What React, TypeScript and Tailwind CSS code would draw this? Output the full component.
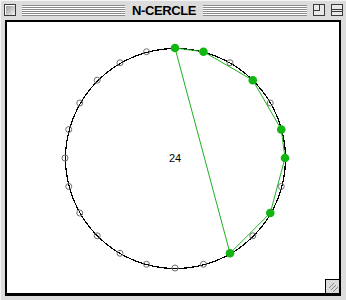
import React from 'react';

const CX = 168; // centre in content coords (page x 174 - 6)
const CY = 136; // page y 157 - 21
const R = 110;
const N = 24;
const picked = [0, 1, 3, 5, 6, 8, 10];

function pt(i: number) {
  const a = (i / N) * Math.PI * 2 - Math.PI / 2;
  return { x: CX + R * Math.cos(a), y: CY + R * Math.sin(a) };
}

function TitleStripes({ className }: { className: string }) {
  return (
    <div
      className={`h-[11px] bg-[repeating-linear-gradient(to_bottom,#8a8a8a_0px,#8a8a8a_1px,#ffffff_1px,#ffffff_2px)] ${className}`}
    />
  );
}

export default function App() {
  const poly = picked.map((i) => pt(i)).map((p) => `${p.x},${p.y}`).join(' ');

  return (
    <div className="w-[346px] h-[300px] bg-[#dcdcdc] border-l border-t border-[#f4f4f4] flex flex-col overflow-hidden">
      {/* title bar */}
      <div className="h-[18px] flex items-center px-[3px] gap-[6px]">
        <div className="w-[12px] h-[12px] border border-[#3a3a3a] bg-[linear-gradient(135deg,#8e8e8e,#f4f4f4)] shadow-[inset_1px_1px_0_#fff]" />
        <TitleStripes className="flex-1" />
        <span className="font-['Liberation_Sans',sans-serif] text-[13px] font-bold leading-none tracking-[-0.4px] text-black px-[1px]">
          N-CERCLE
        </span>
        <TitleStripes className="w-[104px]" />
        <div className="w-[12px] h-[12px] border border-[#3a3a3a] bg-[#e8e8e8] relative">
          <div className="absolute left-0 top-0 w-[6px] h-[6px] border-r border-b border-[#3a3a3a]" />
        </div>
        <div className="w-[12px] h-[12px] border border-[#3a3a3a] bg-[#e8e8e8] flex items-center">
          <div className="w-full h-[3px] border-y border-[#3a3a3a]" />
        </div>
      </div>

      {/* content */}
      <div className="ml-[4px] mr-[5px] mt-[1px] h-[276px] border-2 border-b-[3px] border-black bg-white relative">
        <svg width="333" height="271" className="block">
          <circle cx={CX + 0.5} cy={CY + 0.5} r={R} fill="none" stroke="#000" strokeWidth="1.2" shapeRendering="crispEdges" />
          {Array.from({ length: N }, (_, i) => {
            const p = pt(i);
            return <circle key={i} cx={p.x} cy={p.y} r="3" fill="none" stroke="#6e6e6e" strokeWidth="1" />;
          })}
          <polygon points={poly} fill="none" stroke="#1fb21f" strokeWidth="1" />
          {picked.map((i) => {
            const p = pt(i);
            return <circle key={i} cx={p.x} cy={p.y} r="4.3" fill="#12b512" />;
          })}
          <text x={CX} y={CY + 4} textAnchor="middle" fontSize="11" fontFamily="Liberation Sans, sans-serif" fill="#000">
            24
          </text>
        </svg>
        {/* grow box */}
        <div className="absolute right-0 bottom-0 w-[14px] h-[14px] bg-[#dcdcdc] border-l border-t border-black flex items-center justify-center">
          <svg width="10" height="10">
            <line x1="1" y1="6" x2="6" y2="1" stroke="#888" />
            <line x1="3" y1="8" x2="8" y2="3" stroke="#888" />
            <line x1="5" y1="10" x2="10" y2="5" stroke="#888" />
          </svg>
        </div>
      </div>
    </div>
  );
}
